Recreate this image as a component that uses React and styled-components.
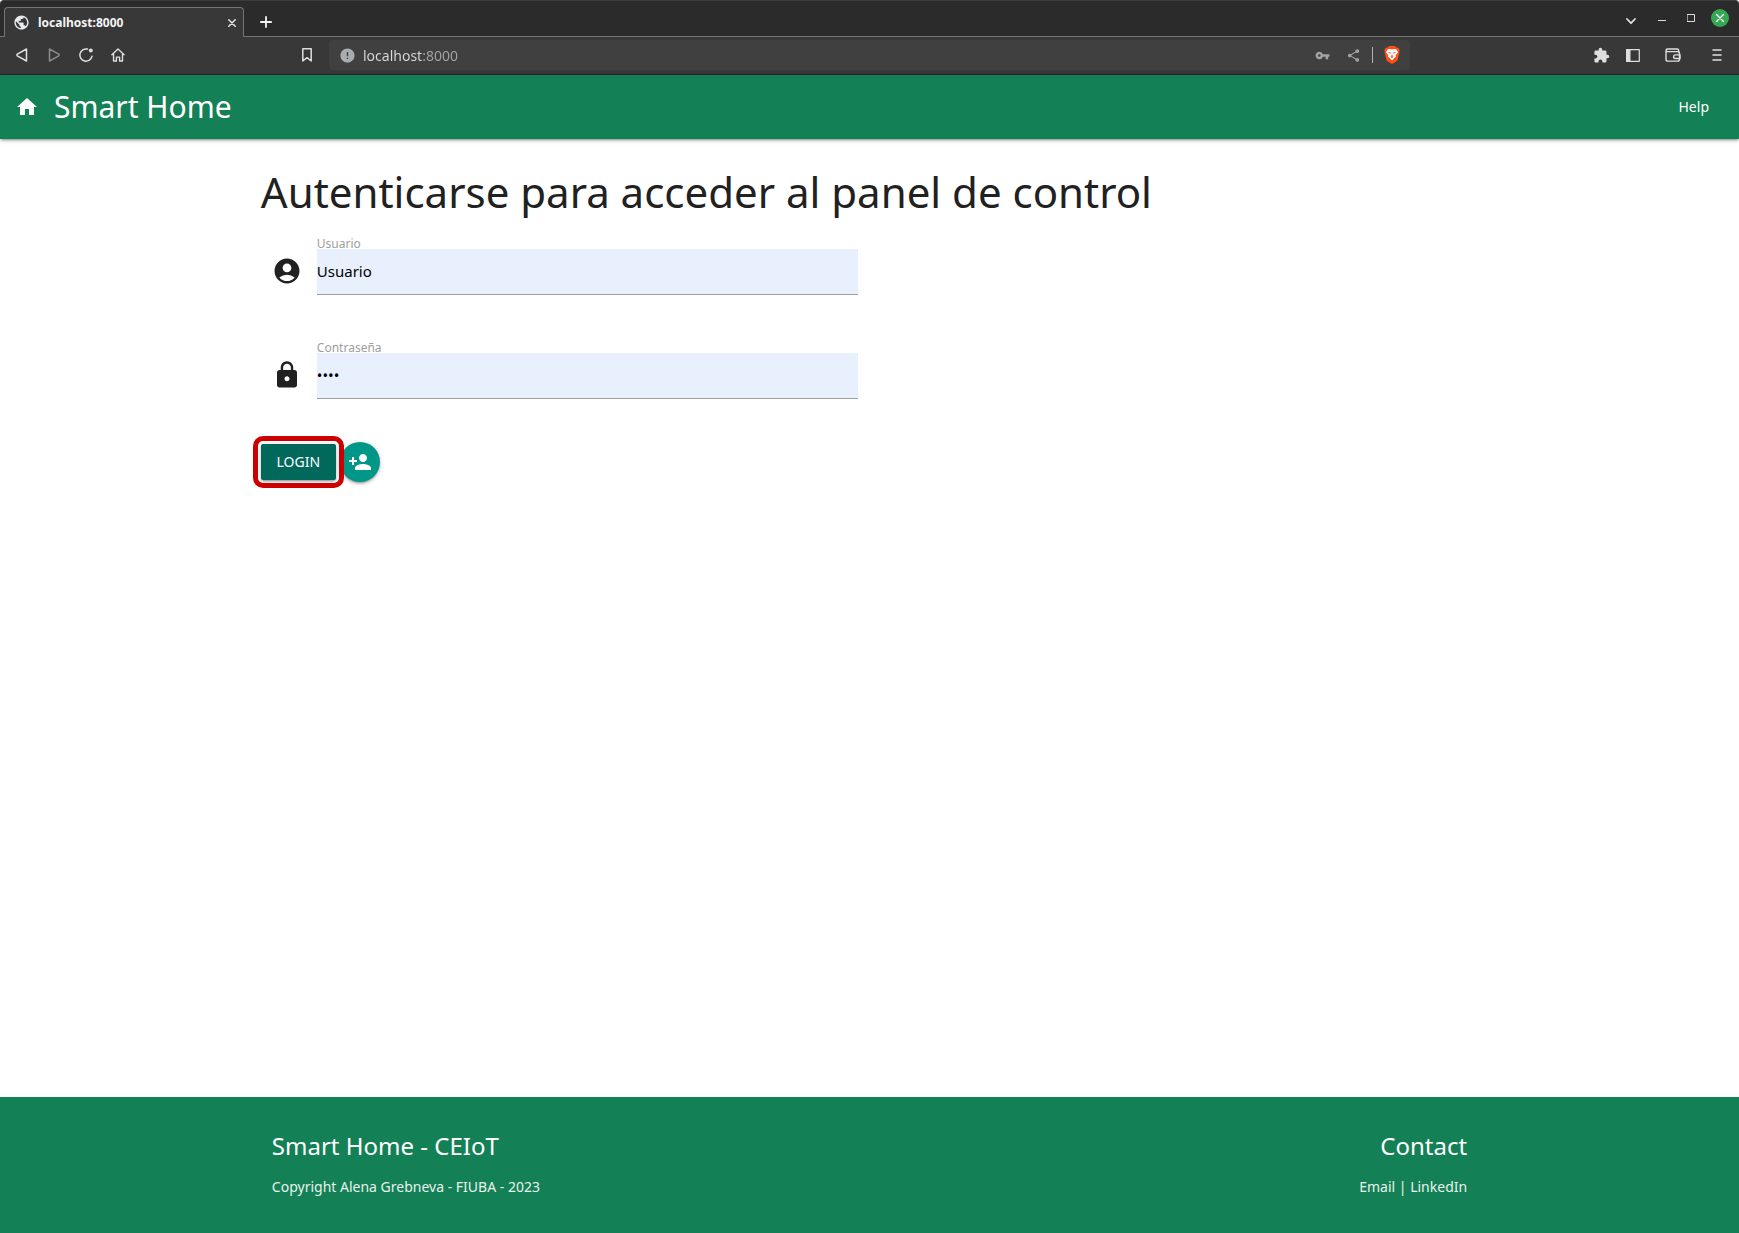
import React, { useState } from "react";
import styled, { createGlobalStyle } from "styled-components";
import {
  MdHome,
  MdAccountCircle,
  MdLock,
  MdPersonAdd,
  MdExtension,
  MdVpnKey,
  MdShare,
  MdError,
  MdPublic,
} from "react-icons/md";

const GlobalStyle = createGlobalStyle`
  *, *::before, *::after { box-sizing: border-box; }
  body {
    margin: 0;
    background: #fff;
    color: #212121;
    font-family: "Noto Sans", "Open Sans", sans-serif;
    font-size: 14px;
    line-height: 20px;
  }
  button, input { font: inherit; }
  svg { display: block; flex: none; }
`;

const Window = styled.div`
  display: flex;
  flex-direction: column;
  min-height: 100vh;
`;

/* ---------- browser chrome ---------- */

const TabStrip = styled.div`
  display: flex;
  align-items: flex-end;
  height: 37px;
  padding-left: 4px;
  background: #2b2b2b;
  border-top: 1px solid #3c3c3c;
  border-radius: 4px 4px 0 0;
  box-shadow: inset 0 -1px #757575;
`;

const Tab = styled.div`
  display: flex;
  align-items: center;
  gap: 8px;
  width: 240px;
  height: 30px;
  padding: 0 1px 0 8px;
  background: #383838;
  border: 1px solid #757575;
  border-bottom: 0;
  border-radius: 4px 4px 0 0;
  color: #f4f4f4;
`;

const TabTitle = styled.span`
  flex: 1;
  font-size: 12px;
  font-weight: 700;
`;

const PlainButton = styled.button`
  display: flex;
  align-items: center;
  justify-content: center;
  flex: none;
  padding: 0;
  border: 0;
  background: none;
  color: ${(p) => p.$color || "#dedede"};
  cursor: pointer;
`;

const TabButton = styled(PlainButton)`
  width: 20px;
  height: 28px;
`;

const NewTabButton = styled(PlainButton)`
  width: 32px;
  height: 30px;
  margin-left: 6px;
`;

const WindowControls = styled.div`
  display: flex;
  align-self: stretch;
  margin-left: auto;
  padding-right: 5px;
`;

const WindowButton = styled(PlainButton)`
  width: ${(p) => p.$width || 29}px;
  height: 34px;
`;

const Toolbar = styled.div`
  display: grid;
  grid-template-columns: 291px minmax(0, 1fr) 329px;
  align-items: center;
  height: 38px;
  padding-bottom: 1px;
  background: #383838;
  border-bottom: 1px solid #262626;
`;

const ToolGroup = styled.div`
  display: flex;
  align-items: center;
  justify-content: ${(p) => (p.$end ? "flex-end" : "flex-start")};
  padding: 0 6px;
`;

const ToolButton = styled(PlainButton)`
  width: 32px;
  height: 32px;
  margin-left: ${(p) => p.$space || 0}px;
`;

const AddressGroup = styled.div`
  display: flex;
  align-items: center;
  gap: 6px;
`;

const AddressBar = styled.div`
  display: flex;
  align-items: center;
  flex: 1;
  height: 30px;
  padding: 0 2px 0 10px;
  gap: 7px;
  border-radius: 4px;
  background: #404040;
  color: #a9adb2;
`;

const AddressInput = styled.input`
  flex: 1;
  min-width: 0;
  height: 24px;
  padding: 0;
  border: 0;
  outline: 0;
  background: linear-gradient(to right, #dcdcdc 60px, #a3a3a3 60px);
  -webkit-background-clip: text;
  background-clip: text;
  -webkit-text-fill-color: transparent;
`;

const Divider = styled.span`
  width: 1px;
  height: 16px;
  margin: 0 -4px;
  background: #b4b4b4;
`;

/* ---------- page ---------- */

const NavBar = styled.nav`
  display: flex;
  align-items: center;
  justify-content: space-between;
  height: 64px;
  padding: 0 30px 0 15px;
  background: #148055;
  color: #fff;
  box-shadow: 0 2px 2px 0 rgba(0, 0, 0, 0.14), 0 3px 1px -2px rgba(0, 0, 0, 0.12),
    0 1px 5px 0 rgba(0, 0, 0, 0.2);
`;

const Brand = styled.a`
  display: flex;
  align-items: center;
  gap: 15px;
  color: inherit;
  font-size: 30px;
  line-height: 64px;
  text-decoration: none;
`;

const TextLink = styled.a`
  color: inherit;
  text-decoration: none;
`;

const Main = styled.main`
  flex: 1;
  width: 70%;
  max-width: 1280px;
  margin: 0 auto;
`;

const Title = styled.h1`
  margin: 29px 0 22px;
  font-size: 42px;
  font-weight: 400;
  line-height: 48px;
`;

const Fields = styled.div`
  display: grid;
  gap: 46px;
  width: 50%;
  padding: 0 11px;
`;

const Field = styled.div`
  display: grid;
  grid-template-columns: 45px minmax(0, 1fr);
  grid-template-rows: 11px 47px;

  svg {
    grid-row: 2;
    margin-top: 7px;
  }
`;

const FieldLabel = styled.label`
  grid-column: 2;
  color: #9e9e9e;
  font-size: 12px;
  line-height: 12px;
`;

const FieldInput = styled.input`
  grid-column: 2;
  width: 100%;
  height: 46px;
  padding: 0 0 2px;
  border: 0;
  border-bottom: 1px solid #9e9e9e;
  border-radius: 0;
  outline: 0;
  background: #e8f0fe;
  color: #000;
  font-size: 15px;
`;

const Actions = styled.div`
  display: flex;
  align-items: center;
  gap: 4px;
  margin-top: 42px;
`;

const raised = `
  border: 0;
  color: #fff;
  cursor: pointer;
  box-shadow: 0 2px 2px 0 rgba(0, 0, 0, 0.14), 0 3px 1px -2px rgba(0, 0, 0, 0.12),
    0 1px 5px 0 rgba(0, 0, 0, 0.2);
`;

const LoginButton = styled.button`
  ${raised}
  position: relative;
  width: 75px;
  height: 36px;
  padding: 0;
  border-radius: 2px;
  outline: 5px solid #cc0000;
  outline-offset: 3px;
  background: #00695c;
  text-transform: uppercase;
`;

const RoundButton = styled.button`
  ${raised}
  display: grid;
  place-items: center;
  width: 40px;
  height: 40px;
  padding: 0;
  border-radius: 50%;
  background: #009688;
`;

const Footer = styled.footer`
  padding: 33px 0 36px;
  background: #148055;
  color: #fff;
`;

const FooterInner = styled.div`
  display: flex;
  justify-content: space-between;
  width: 70%;
  max-width: 1280px;
  margin: 0 auto;
  padding: 0 11px;
`;

const FooterColumn = styled.section`
  text-align: ${(p) => (p.$right ? "right" : "left")};
`;

const FooterTitle = styled.h2`
  margin: 0 0 15px;
  font-size: 24px;
  font-weight: 400;
  line-height: 32px;
`;

const FooterText = styled.p`
  margin: 0;
  color: #e7f2ed;
`;

/* ---------- icons ---------- */

const Glyph = ({ w = 16, h = w, box, children, sw = 1.5 }) => (
  <svg
    width={w}
    height={h}
    viewBox={box || `0 0 ${w} ${h}`}
    fill="none"
    stroke="currentColor"
    strokeWidth={sw}
    strokeLinecap="round"
    strokeLinejoin="round"
    aria-hidden="true"
  >
    {children}
  </svg>
);

const BraveIcon = () => (
  <svg width="16" height="18" viewBox="0 0 16 18" aria-hidden="true">
    <path
      d="M5 0h6l1.700 1.700 1.500-.2L15.700 4l-.5 1.700.3 1-1.900 7.100c-.2.8-.7 1.300-1.300 1.700L8 18l-4.300-2.500c-.6-.4-1.100-.9-1.300-1.700L.5 6.700l.3-1L.3 4l1.500-2.500 1.500.2z"
      fill="#fb4f14"
    />
    <path
      d="M3.800 3.300 5.600 3 8 3.500 10.400 3l1.800.3 1.700 2.500-.6 1.400-1.800 2.200.4 1.600-1.600 1.100L8 14.500l-2.300-2.400-1.600-1.100.4-1.600-1.800-2.200-.6-1.400z"
      fill="#fff"
    />
    <path
      d="M4.300 5.900 7 6.400l-.6 1.200-1.300-.4zM11.700 5.900 9 6.400l.6 1.200 1.300-.4zM8 8.300l.8 1.200L8 10l-.8-.5zM6.300 10.800 8 10.100l1.700.7L8 12z"
      fill="#fb4f14"
    />
  </svg>
);

export default function App() {
  const [address, setAddress] = useState("localhost:8000");
  const [user, setUser] = useState("Usuario");
  const [password, setPassword] = useState("1234");

  return (
    <Window>
      <GlobalStyle />

      <header>
        <TabStrip>
          <Tab>
            <MdPublic size={17} color="#e8eaed" aria-hidden="true" />
            <TabTitle>localhost:8000</TabTitle>
            <TabButton aria-label="Close tab">
              <Glyph w={8} sw={1.6}>
                <path d="M.8.8l6.400 6.400M7.200.8.8 7.200" />
              </Glyph>
            </TabButton>
          </Tab>
          <NewTabButton aria-label="New tab" $color="#f4f4f4">
            <Glyph w={12} sw={1.8}>
              <path d="M6 .9v10.200M.9 6h10.200" />
            </Glyph>
          </NewTabButton>
          <WindowControls>
            <WindowButton aria-label="Search tabs" $width={33}>
              <Glyph w={10} h={14} sw={1.8}>
                <path d="M1 8l4 4.200L9 8" />
              </Glyph>
            </WindowButton>
            <WindowButton aria-label="Minimize">
              <Glyph w={8} h={8} sw={1}>
                <path d="M0 6.500h8" />
              </Glyph>
            </WindowButton>
            <WindowButton aria-label="Maximize">
              <Glyph w={8} sw={1}>
                <path d="M.5.5h7v7h-7z" />
              </Glyph>
            </WindowButton>
            <WindowButton aria-label="Close window">
              <Glyph w={18} sw={1.4}>
                <circle cx="9" cy="9" r="9" fill="#34a853" stroke="none" />
                <path d="M5.500 5.500l7 7M12.500 5.500l-7 7" stroke="#fff" />
              </Glyph>
            </WindowButton>
          </WindowControls>
        </TabStrip>

        <Toolbar>
          <ToolGroup>
            <ToolButton aria-label="Back">
              <Glyph w={14}>
                <path d="M11.500 1v12L2.300 7.800a1 1 0 0 1 0-1.600z" />
              </Glyph>
            </ToolButton>
            <ToolButton aria-label="Forward" $color="#8a8a8a">
              <Glyph w={14}>
                <path d="M2.500 1v12l9.200-5.200a1 1 0 0 0 0-1.600z" />
              </Glyph>
            </ToolButton>
            <ToolButton aria-label="Reload">
              <Glyph w={14}>
                <path d="M13 8.200A6.100 6.100 0 1 1 8.500 1.100" />
                <circle cx="11.800" cy="2.600" r="2" fill="currentColor" stroke="none" />
              </Glyph>
            </ToolButton>
            <ToolButton aria-label="Home">
              <Glyph w={14} box="0 0 15 15">
                <path d="M1 7.200 7.500 1 14 7.200M2.700 6.200V14h3.100V9.800h3.400V14h3.100V6.200" />
              </Glyph>
            </ToolButton>
          </ToolGroup>

          <AddressGroup>
            <ToolButton aria-label="Bookmark this page">
              <Glyph w={10} h={14}>
                <path d="M.8.800h8.400v12.200L5 9.700.800 13z" />
              </Glyph>
            </ToolButton>
            <AddressBar>
              <MdError size={17} aria-hidden="true" />
              <AddressInput
                aria-label="Address"
                value={address}
                onChange={(e) => setAddress(e.target.value)}
              />
              <PlainButton aria-label="Saved passwords" $color="#a3a3a3">
                <MdVpnKey size={15} />
              </PlainButton>
              <ToolButton aria-label="Share" $color="#a3a3a3">
                <MdShare size={15} />
              </ToolButton>
              <Divider />
              <ToolButton aria-label="Brave Shields">
                <BraveIcon />
              </ToolButton>
            </AddressBar>
          </AddressGroup>

          <ToolGroup $end>
            <ToolButton aria-label="Extensions">
              <MdExtension size={17} />
            </ToolButton>
            <ToolButton aria-label="Sidebar">
              <Glyph w={14} h={13} sw={1.2}>
                <path d="M.7.7h12.600v11.600H.7z" />
                <path d="M.7.7h3.200v11.600H.7z" fill="currentColor" />
              </Glyph>
            </ToolButton>
            <ToolButton aria-label="Wallet" $space={8}>
              <Glyph w={16} h={14} sw={1.4}>
                <path d="M14 5V3.600M1 2.500v8.700c0 1.100.8 1.900 1.900 1.900h9.700c1.100 0 1.900-.8 1.900-1.900V5.500c0-1.100-.8-1.900-1.900-1.900H2.300C.7 3.600.7 1 2.300 1h9.900c.9 0 1.500.6 1.500 1.500v1.100" />
                <path d="M15 6.900h-4.600a1.800 1.800 0 0 0 0 3.600H15z" />
              </Glyph>
            </ToolButton>
            <ToolButton aria-label="Menu" $space={12}>
              <Glyph w={10} h={12}>
                <path d="M1 1h8M1 6h8M1 11h8" />
              </Glyph>
            </ToolButton>
          </ToolGroup>
        </Toolbar>
      </header>

      <NavBar>
        <Brand href="#">
          <MdHome size={24} aria-hidden="true" />
          Smart Home
        </Brand>
        <TextLink href="#help">Help</TextLink>
      </NavBar>

      <Main>
        <Title>Autenticarse para acceder al panel de control</Title>
        <form onSubmit={(e) => e.preventDefault()}>
          <Fields>
            <Field>
              <FieldLabel htmlFor="user">Usuario</FieldLabel>
              <MdAccountCircle size={30} aria-hidden="true" />
              <FieldInput id="user" value={user} onChange={(e) => setUser(e.target.value)} />
            </Field>
            <Field>
              <FieldLabel htmlFor="password">Contraseña</FieldLabel>
              <MdLock size={30} aria-hidden="true" />
              <FieldInput
                id="password"
                type="password"
                value={password}
                onChange={(e) => setPassword(e.target.value)}
              />
            </Field>
          </Fields>
          <Actions>
            <LoginButton type="submit">Login</LoginButton>
            <RoundButton type="button" aria-label="Registrarse">
              <MdPersonAdd size={24} />
            </RoundButton>
          </Actions>
        </form>
      </Main>

      <Footer>
        <FooterInner>
          <FooterColumn>
            <FooterTitle>Smart Home - CEIoT</FooterTitle>
            <FooterText>Copyright Alena Grebneva - FIUBA - 2023</FooterText>
          </FooterColumn>
          <FooterColumn $right>
            <FooterTitle>Contact</FooterTitle>
            <FooterText>
              <TextLink href="#email">Email</TextLink> | <TextLink href="#linkedin">LinkedIn</TextLink>
            </FooterText>
          </FooterColumn>
        </FooterInner>
      </Footer>
    </Window>
  );
}
